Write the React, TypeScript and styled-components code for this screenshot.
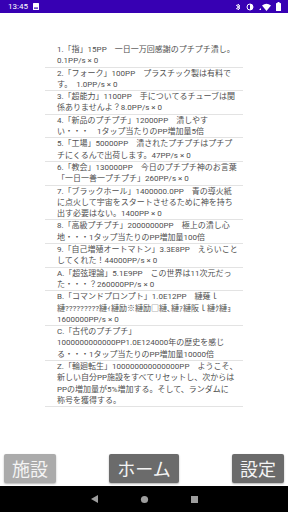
import { FC } from 'react';
import styled, { createGlobalStyle } from 'styled-components';

const GlobalStyle = createGlobalStyle`
  html, body {
    margin: 0;
    padding: 0;
    background: #ffffff;
  }
  body {
    font-family: Roboto, 'Noto Sans CJK JP', sans-serif;
  }
`;

const Screen = styled.div`
  display: flex;
  flex-direction: column;
  width: 288px;
  height: 512px;
  overflow: hidden;
  background: #ffffff;
`;

const StatusBar = styled.div`
  display: flex;
  align-items: center;
  justify-content: space-between;
  height: 13px;
  padding: 0 7px 0 8px;
  background: #3700b3;
  color: #ffffff;
  font-family: Roboto, sans-serif;
  font-size: 8px;
`;

const StatusGroup = styled.div`
  display: flex;
  align-items: center;
  gap: 5px;
`;

const Main = styled.main`
  flex: 1;
  display: flex;
  flex-direction: column;
  justify-content: space-between;
  padding-top: 31px;
`;

const List = styled.ul`
  list-style: none;
  margin: 0 0 0 45px;
  padding: 0;
  width: 198px;
`;

const Item = styled.li`
  padding-left: 12px;
  border-bottom: 1px solid #e3e3e3;
  color: #4f4f4f;
  font-size: 8px;
  line-height: 11.3px;
  white-space: nowrap;
`;

const Line = styled.span`
  display: block;
`;

const ButtonRow = styled.div`
  display: flex;
  justify-content: space-between;
  align-items: center;
  padding: 0 4px 3px;
`;

const NavButton = styled.button<{ $muted?: boolean }>`
  height: 29px;
  padding: 0 8px;
  border: none;
  border-radius: 2px;
  background: ${(p) => (p.$muted ? '#ababab' : '#6b6b6b')};
  color: #f4f4f4;
  font-family: 'Noto Sans CJK JP', sans-serif;
  font-size: 18px;
  line-height: 29px;
  box-shadow: 0 1px 2px rgba(0, 0, 0, 0.3);
`;

const SystemNav = styled.nav`
  display: flex;
  justify-content: center;
  align-items: center;
  gap: 41px;
  height: 26px;
  background: #000000;
`;

const items: string[][] = [
  ['1.「指」15PP　一日一万回感謝のプチプチ潰し。', '0.1PP/s × 0'],
  ['2.「フォーク」100PP　プラスチック製は有料で', 'す。　1.0PP/s × 0'],
  ['3.「超能力」1100PP　手についてるチューブは関', '係ありませんよ？8.0PP/s × 0'],
  ['4.「新品のプチプチ」12000PP　潰しやす', 'い・・・　1タップ当たりのPP増加量5倍'],
  ['5.「工場」50000PP　潰されたプチプチはプチプ', 'チにくるんで出荷します。47PP/s × 0'],
  ['6.「教会」130000PP　今日のプチプチ神のお言葉', '「一日一善一プチプチ」260PP/s × 0'],
  [
    '7.「ブラックホール」1400000.0PP　青の導火紙',
    'に点火して宇宙をスタートさせるために神を持ち',
    '出す必要はない。1400PP × 0',
  ],
  ['8.「高級プチプチ」20000000PP　極上の潰し心', '地・・・1タップ当たりのPP増加量100倍'],
  ['9.「自己増殖オートマトン」3.3E8PP　えらいこと', 'してくれた！44000PP/s × 0'],
  ['A.「超弦理論」5.1E9PP　この世界は11次元だっ', 'た・・・？260000PP/s × 0'],
  [
    'B.「コマンドプロンプト」1.0E12PP　縺薙ｌ',
    '縺?????????縺ｨ縺励※縺励□縺､縺ｧ縺阪ｌ縺ｸ縺ｮ',
    '1600000PP/s × 0',
  ],
  [
    'C.「古代のプチプチ」',
    '1000000000000PP1.0E124000年の歴史を感じ',
    'る・・・1タップ当たりのPP増加量10000倍',
  ],
  [
    'Z.「輪廻転生」100000000000000PP　ようこそ、',
    '新しい自分PP施設をすべてリセットし、次からは',
    'PPの増加量が5%増加する。そして、ランダムに',
    '称号を獲得する。',
  ],
];

const StatusIcons: FC = () => (
  <StatusGroup>
    <svg width="6" height="8" viewBox="0 0 6 8" fill="none" stroke="#fff" strokeWidth="0.9">
      <path d="M1 2l4 3-2 2V1l2 2-4 3" />
    </svg>
    <svg width="8" height="8" viewBox="0 0 8 8">
      <circle cx="4" cy="4" r="3" fill="none" stroke="#fff" strokeWidth="1" />
      <path d="M4 1a3 3 0 0 1 0 6z" fill="#fff" />
    </svg>
    <svg width="12" height="8" viewBox="0 0 12 8">
      <path d="M0 7l2-2v2z" fill="#fff" />
      <path d="M3 2.5Q7.5-1 12 2.5L7.5 8z" fill="#fff" />
    </svg>
    <svg width="5" height="9" viewBox="0 0 5 9">
      <rect x="1.5" y="0" width="2" height="1" fill="#fff" />
      <rect x="0" y="1" width="5" height="8" rx="0.6" fill="#fff" />
    </svg>
  </StatusGroup>
);

const App: FC = () => (
  <Screen>
    <GlobalStyle />
    <StatusBar>
      <StatusGroup>
        <span>13:45</span>
        <svg width="6" height="7" viewBox="0 0 6 7">
          <rect x="0" y="0" width="6" height="7" rx="0.5" fill="#fff" />
          <rect x="1" y="4.5" width="4" height="1.2" fill="#3700b3" />
        </svg>
      </StatusGroup>
      <StatusIcons />
    </StatusBar>
    <Main>
      <List>
        {items.map((lines, i) => (
          <Item key={i}>
            {lines.map((l, j) => (
              <Line key={j}>{l}</Line>
            ))}
          </Item>
        ))}
      </List>
      <ButtonRow>
        <NavButton $muted>施設</NavButton>
        <NavButton>ホーム</NavButton>
        <NavButton>設定</NavButton>
      </ButtonRow>
    </Main>
    <SystemNav>
      <svg width="9" height="10" viewBox="0 0 9 10">
        <path d="M8 1v8L1 5z" fill="#9e9e9e" />
      </svg>
      <svg width="9" height="9" viewBox="0 0 9 9">
        <circle cx="4.5" cy="4.5" r="3.6" fill="#9e9e9e" />
      </svg>
      <svg width="9" height="9" viewBox="0 0 9 9">
        <rect x="1" y="1" width="7" height="7" fill="#9e9e9e" />
      </svg>
    </SystemNav>
  </Screen>
);

export default App;
